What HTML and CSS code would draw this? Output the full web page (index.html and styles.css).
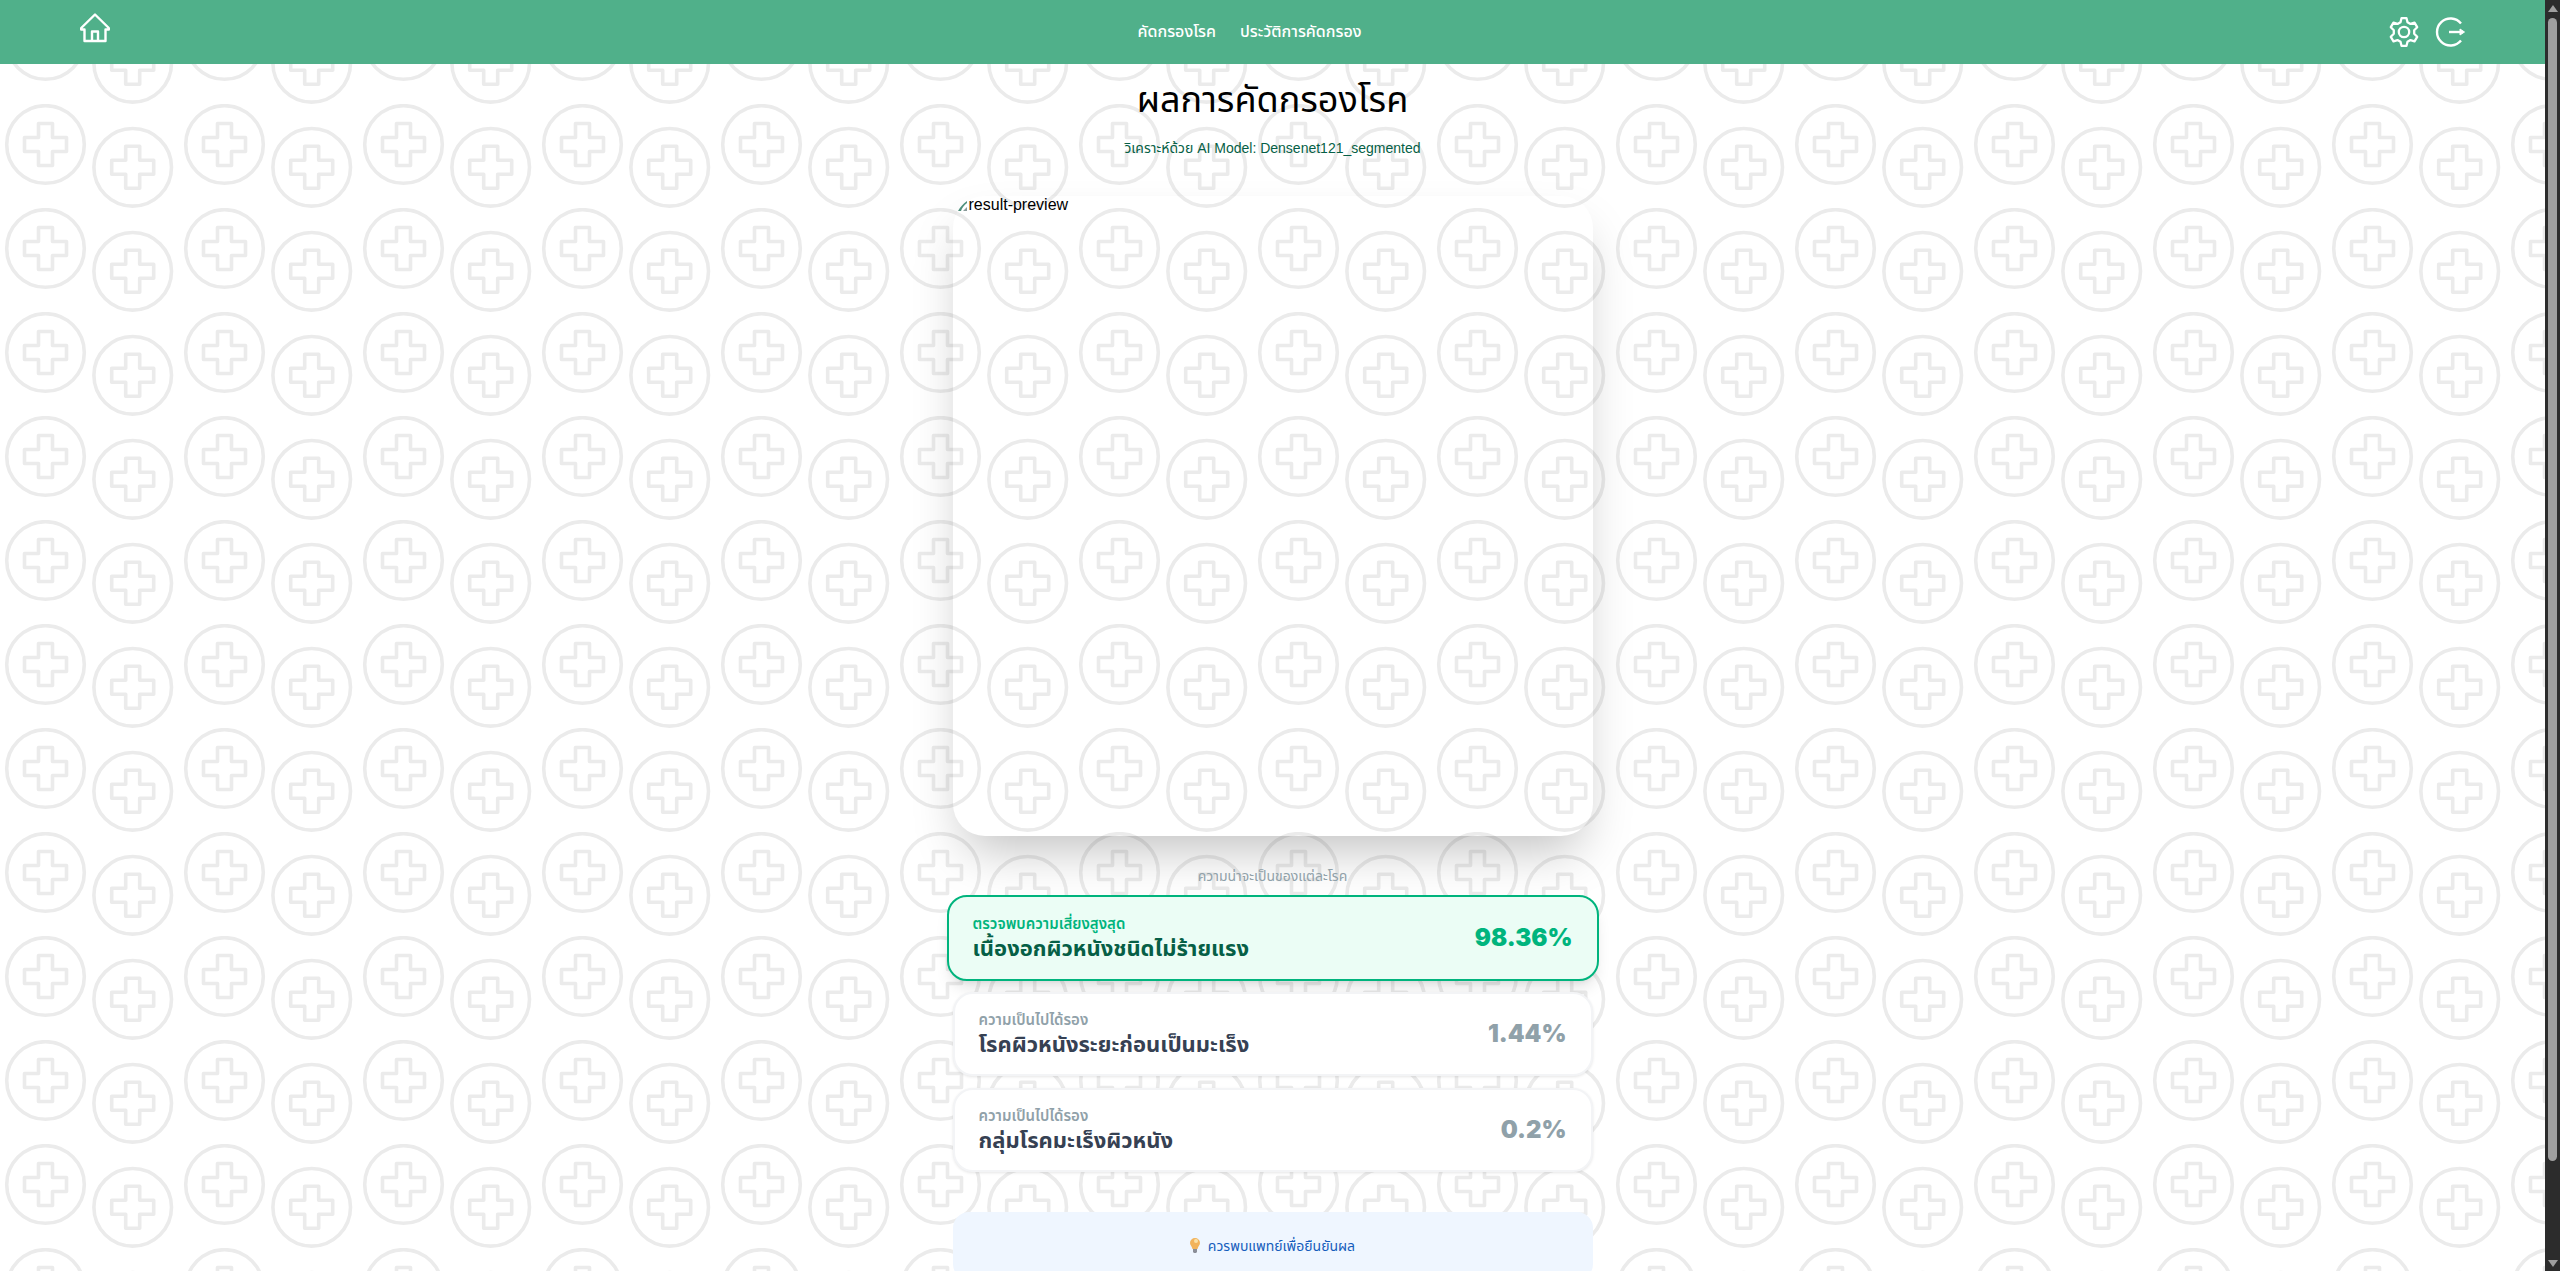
FILE: index.html
```html
<!DOCTYPE html>
<html lang="th">
<head>
<meta charset="utf-8">
<meta name="viewport" content="width=device-width, initial-scale=1">
<title>ผลการคัดกรองโรค</title>
<link rel="stylesheet" href="styles.css">
</head>
<body>
<div class="viewport">
  <div class="page">
    <header class="navbar">
      <a class="icon-link" href="#" aria-label="Home">
        <svg width="32" height="32" viewBox="0 0 32 32" fill="none" stroke="#fff" stroke-width="2.400" stroke-linejoin="round"><path d="M16 2.500 2.200 16v1.500H5.500V29h21V17.500h3.300V16L16 2.500Z"/><path d="M13 29V19.500h6V29"/></svg>
      </a>
      <nav class="menu">
        <a href="#">คัดกรองโรค</a>
        <a href="#">ประวัติการคัดกรอง</a>
      </nav>
      <div class="actions">
        <button class="icon-button" type="button" aria-label="Settings">
          <svg width="32" height="32" viewBox="0 0 32 32" fill="none" stroke="#fff" stroke-width="2.300" stroke-linejoin="round"><circle cx="16" cy="16" r="5.200"/><path d="M13.500 2.200h5l1 4 3 1.700 4-1.200 2.700 4.500-3 3v3.600l3 3-2.700 4.500-4-1.200-3 1.700-1 4h-5l-1-4-3-1.700-4 1.200-2.700-4.500 3-3v-3.600l-3-3 2.700-4.500 4 1.200 3-1.700 1-4Z"/></svg>
        </button>
        <button class="icon-button" type="button" aria-label="Log out">
          <svg width="32" height="32" viewBox="0 0 32 32" fill="none" stroke="#fff" stroke-width="2.400"><path d="M27 7.500A13.500 13.500 0 1 0 27 24.500"/><path d="M15 16h12"/><path d="m26 13 4.500 3-4.500 3Z" fill="#fff" stroke-width="1"/></svg>
        </button>
      </div>
    </header>
    <main class="content">
      <h1 class="title">ผลการคัดกรองโรค</h1>
      <p class="model">วิเคราะห์ด้วย AI Model: Densenet121_segmented</p>
      <div class="preview" role="img" aria-label="result-preview">
        <svg width="16" height="16" viewBox="0 0 16 16"><path d="M5 15c2-4 5-7 9-10v2c-3 2-5 5-6 8Z" fill="#4d8f7c"/><path d="m10 15 4-4v4Z" fill="#8a9a9a"/></svg>
        <span>result-preview</span>
      </div>
      <section class="results">
        <h2 class="caption">ความน่าจะเป็นของแต่ละโรค</h2>
        <article class="card card-top">
          <div class="info"><span class="rank">ตรวจพบความเสี่ยงสูงสุด</span><span class="name">เนื้องอกผิวหนังชนิดไม่ร้ายแรง</span></div>
          <strong class="score">98.36%</strong>
        </article>
        <article class="card">
          <div class="info"><span class="rank">ความเป็นไปได้รอง</span><span class="name">โรคผิวหนังระยะก่อนเป็นมะเร็ง</span></div>
          <strong class="score">1.44%</strong>
        </article>
        <article class="card">
          <div class="info"><span class="rank">ความเป็นไปได้รอง</span><span class="name">กลุ่มโรคมะเร็งผิวหนัง</span></div>
          <strong class="score">0.2%</strong>
        </article>
      </section>
      <aside class="advice">
        <svg width="10" height="16" viewBox="0 0 10 16"><path d="M5 0a5 5 0 0 0-5 5c0 2 2 3.500 2.500 6h5C8 8.500 10 7 10 5a5 5 0 0 0-5-5Z" fill="#f2b35c"/><circle cx="6" cy="3" r="2" fill="#fbe2a8"/><path d="M3 11h4v3l-1 1H4l-1-1Z" fill="#8b8e98"/></svg>
        <span>ควรพบแพทย์เพื่อยืนยันผล</span>
      </aside>
    </main>
  </div>
  <div class="scrollbar" aria-hidden="true">
    <span class="arrow arrow-up"></span>
    <span class="track"><span class="thumb"></span></span>
    <span class="arrow arrow-down"></span>
  </div>
</div>
</body>
</html>
```
FILE: styles.css
```css
* { box-sizing: border-box; }

body {
  margin: 0;
  font-family: "Liberation Sans", "Noto Sans Thai", Tahoma, sans-serif;
  font-size: 16px;
  line-height: 24px;
  color: #000;
}

.viewport { display: flex; height: 100vh; overflow: hidden; }

.page {
  flex: 1;
  min-width: 0;
  overflow: hidden;
  background: #fff url("data:image/svg+xml,%3Csvg xmlns='http://www.w3.org/2000/svg' width='179' height='104' fill='none' stroke='%23ebebeb' stroke-width='3.6' stroke-linejoin='round'%3E%3Cdefs%3E%3Cg id='a'%3E%3Ccircle r='38.800'/%3E%3Cpath d='M-7-21H7V-7H21V7H7V21H-7V7H-21V-7H-7Z'/%3E%3C/g%3E%3C/defs%3E%3Cuse href='%23a' x='45.500' y='40.500'/%3E%3Cuse href='%23a' x='132.700' y='63.300'/%3E%3C/svg%3E");
}

.navbar {
  display: flex;
  align-items: center;
  justify-content: space-between;
  height: 64px;
  padding: 0 79px;
  background: #50b08a;
}

.icon-link, .icon-button { display: block; width: 32px; height: 32px; }
.icon-link { margin-bottom: 8px; }
.icon-link svg, .icon-button svg { display: block; }
.icon-button { padding: 0; border: 0; background: none; }

.menu { display: flex; gap: 24px; }
.menu a { color: #fff; font-weight: 500; text-decoration: none; }

.actions { display: flex; justify-content: flex-end; gap: 14px; }

.content {
  display: flex;
  flex-direction: column;
  width: 640px;
  margin: 0 auto;
}

.title {
  margin: 16px 0 0;
  font-size: 36px;
  font-weight: 400;
  line-height: 40px;
  text-align: center;
}

.model {
  margin: 16px 0 0;
  font-size: 14px;
  color: #065f46;
  text-align: center;
}

.preview {
  display: flex;
  height: 640px;
  margin-top: 36px;
  border-radius: 32px;
  line-height: 18px;
  box-shadow: 0 25px 50px -12px rgba(0, 0, 0, 0.25);
}

.results { display: flex; flex-direction: column; gap: 12px; margin-top: 32px; }

.caption {
  margin: 0;
  font-size: 14px;
  font-weight: 400;
  line-height: 16px;
  color: #90a1a9;
  text-align: center;
}

.card {
  display: flex;
  align-items: center;
  justify-content: space-between;
  height: 84px;
  padding: 0 24px;
  border: 2px solid #f3f4f6;
  border-radius: 20px;
  background: #fff;
  box-shadow: 0 1px 3px rgba(0, 0, 0, 0.1);
}

.info { display: flex; flex-direction: column; }
.rank { font-size: 15px; font-weight: 600; line-height: 22px; color: #90a1a9; }
.name { font-size: 22px; font-weight: 700; line-height: 28px; color: #364153; }
.score { font-family: Inter, sans-serif; font-size: 24px; font-weight: 900; line-height: 32px; color: #90a1a9; }

.card-top {
  height: 86px;
  margin: -1px -6px;
  border-color: #00b47d;
  background: #ebfdf5;
  box-shadow: 0 10px 15px -3px rgba(0, 0, 0, 0.1), 0 4px 6px -4px rgba(0, 0, 0, 0.1);
}
.card-top .rank, .card-top .score { color: #00b47d; }
.card-top .name { color: #065f46; }

.advice {
  display: flex;
  align-items: center;
  justify-content: center;
  gap: 8px;
  margin-top: 40px;
  height: 68px;
  border-radius: 16px;
  background: #eff6ff;
  color: #155dbc;
  font-size: 14px;
}

.scrollbar {
  display: flex;
  flex-direction: column;
  align-items: center;
  width: 15px;
  padding: 5px 0 4px;
  background: #2c2c2c;
}
.track { flex: 1; width: 9px; padding-top: 6px; }
.thumb { display: block; height: 92%; border-radius: 5px; background: #9f9f9f; }
.arrow { border: 5px solid transparent; }
.arrow-up { border-top: 0; border-bottom: 7px solid #9f9f9f; }
.arrow-down { border-bottom: 0; border-top: 7px solid #9f9f9f; }
```
